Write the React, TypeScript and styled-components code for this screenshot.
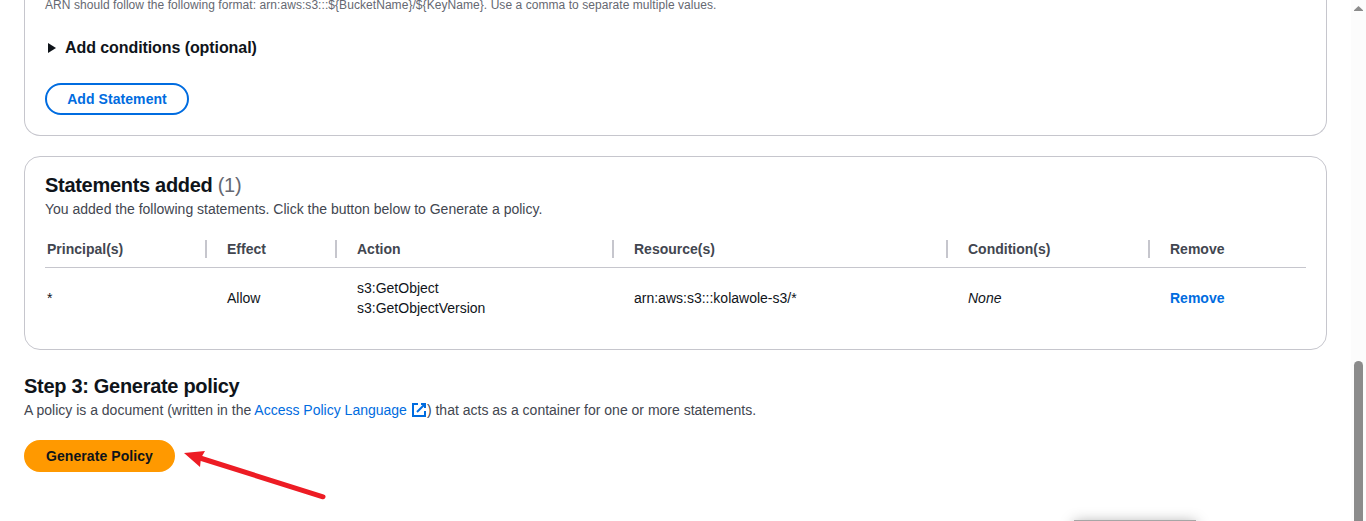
import React from "react";
import styled, { createGlobalStyle } from "styled-components";

const GlobalStyle = createGlobalStyle`
  * { box-sizing: border-box; }
  html, body { margin: 0; padding: 0; overflow: hidden; }
  body {
    background: #fff;
    color: #0f141a;
    font-family: "Liberation Sans", Arial, sans-serif;
    font-size: 14px;
    line-height: 20px;
  }
`;

const Viewport = styled.div`
  position: relative;
  display: flex;
  width: 1366px;
  height: 521px;
  overflow: hidden;
`;

const Page = styled.main`
  flex: 1;
  padding: 0 24px;
  display: flex;
  flex-direction: column;
  gap: 20px;
`;

const Card = styled.section<{ $clipped?: boolean }>`
  border: 1px solid #c6c6cd;
  border-radius: ${(p) => (p.$clipped ? "0 0 16px 16px" : "16px")};
  border-top-width: ${(p) => (p.$clipped ? "0" : "1px")};
  height: ${(p) => (p.$clipped ? "136px" : "194px")};
  padding: ${(p) => (p.$clipped ? "0 20px" : "15px 20px 0")};
`;

const Constraint = styled.p`
  margin: -3px 0 0;
  font-size: 12px;
  line-height: 16px;
  letter-spacing: 0.06px;
  color: #656871;
`;

const Expander = styled.div`
  display: flex;
  align-items: center;
  margin-top: 25px;
  height: 20px;
  padding-left: 3px;
  gap: 9px;
`;

const ExpanderTitle = styled.h3`
  margin: 0;
  font-size: 16px;
  line-height: 20px;
  letter-spacing: -0.08px;
`;

const Button = styled.button<{ $primary?: boolean }>`
  display: block;
  height: 32px;
  width: ${(p) => (p.$primary ? "151px" : "144px")};
  margin-top: ${(p) => (p.$primary ? "20px" : "25px")};
  padding: 0;
  border: 2px solid ${(p) => (p.$primary ? "#ff9900" : "#006ce0")};
  border-radius: 20px;
  background: ${(p) => (p.$primary ? "#ff9900" : "#fff")};
  color: ${(p) => (p.$primary ? "#0f141a" : "#006ce0")};
  font: bold 14px/20px "Liberation Sans", Arial, sans-serif;
  letter-spacing: 0.07px;
`;

const Title = styled.h2`
  margin: 0;
  font-size: 20px;
  line-height: 26px;
  letter-spacing: -0.3px;
`;

const Counter = styled.span`
  color: #656871;
  font-weight: 400;
`;

const Description = styled.p`
  margin: 1px 0 0;
  color: #424650;
`;

const TableGrid = styled.div`
  display: grid;
  grid-template-columns: 162px 130px 277px 334px 202px 156px;
`;

const HeaderRow = styled(TableGrid)`
  margin-top: 21px;
  height: 28px;
  border-bottom: 1px solid #c6c6cd;
`;

const HeaderCell = styled.div`
  height: 18px;
  padding-left: 20px;
  line-height: 18px;
  font-weight: 700;
  color: #424650;
  border-right: 2px solid #c6c6cd;
  &:first-child { padding-left: 2px; }
  &:last-child { border-right: 0; }
`;

const BodyRow = styled(TableGrid)`
  height: 60px;
  align-items: center;
`;

const Cell = styled.div`
  padding-left: 20px;
  &:first-child { padding-left: 2px; }
`;

const RemoveLink = styled.a`
  color: #006ce0;
  font-weight: 700;
`;

const Step = styled.section`
  margin-top: 3px;
`;

const DocLink = styled.a`
  color: #006ce0;
  svg { vertical-align: top; margin: 2px 0 0 4px; }
`;

const Scrollbar = styled.div`
  width: 15px;
  display: flex;
  flex-direction: column;
  align-items: center;
  background: #fcfcfc;
  padding-top: 6px;
  svg { flex-shrink: 0; }
`;

const Thumb = styled.div`
  width: 9px;
  height: 180px;
  margin-top: 350px;
  border-radius: 5px;
  background: #8b8b8b;
  flex-shrink: 0;
`;

const Arrow = styled.svg`
  position: absolute;
  left: 180px;
  top: 444px;
`;

const Popup = styled.div`
  position: absolute;
  left: 1074px;
  top: 520px;
  width: 122px;
  height: 30px;
  background: #a6a6a6;
  box-shadow: 0 2px 14px rgba(0, 0, 0, 0.34);
`;

const headers = ["Principal(s)", "Effect", "Action", "Resource(s)", "Condition(s)", "Remove"];

function ExternalIcon() {
  return (
    <svg width="16" height="16" viewBox="0 0 16 16" fill="none" stroke="#006ce0" strokeWidth="2">
      <path d="M10 2h4v4" />
      <path d="m6 10 8-8" />
      <path d="M14 9.048V14H2V2h5" />
    </svg>
  );
}

export default function App() {
  return (
    <>
      <GlobalStyle />
      <Viewport>
        <Page>
          <Card $clipped>
            <Constraint>
              {"ARN should follow the following format: arn:aws:s3:::${BucketName}/${KeyName}. Use a comma to separate multiple values."}
            </Constraint>
            <Expander>
              <svg width="8" height="10" viewBox="0 0 8 10">
                <path d="M0 0 8 5 0 10Z" fill="#0f141a" />
              </svg>
              <ExpanderTitle>Add conditions (optional)</ExpanderTitle>
            </Expander>
            <Button>Add Statement</Button>
          </Card>
          <Card>
            <Title>
              Statements added <Counter>(1)</Counter>
            </Title>
            <Description>
              You added the following statements. Click the button below to Generate a policy.
            </Description>
            <HeaderRow>
              {headers.map((h) => (
                <HeaderCell key={h}>{h}</HeaderCell>
              ))}
            </HeaderRow>
            <BodyRow>
              <Cell>*</Cell>
              <Cell>Allow</Cell>
              <Cell>
                s3:GetObject
                <br />
                s3:GetObjectVersion
              </Cell>
              <Cell>arn:aws:s3:::kolawole-s3/*</Cell>
              <Cell>
                <em>None</em>
              </Cell>
              <Cell>
                <RemoveLink>Remove</RemoveLink>
              </Cell>
            </BodyRow>
          </Card>
          <Step>
            <Title>Step 3: Generate policy</Title>
            <Description>
              A policy is a document (written in the{" "}
              <DocLink>
                Access Policy Language
                <ExternalIcon />
              </DocLink>
              ) that acts as a container for one or more statements.
            </Description>
            <Button $primary>Generate Policy</Button>
          </Step>
        </Page>
        <Scrollbar>
          <svg width="9" height="5" viewBox="0 0 9 5">
            <path d="M4.5 0 9 4.2V5H0V4.2Z" fill="#8b8b8b" />
          </svg>
          <Thumb />
        </Scrollbar>
        <Arrow width="150" height="60" viewBox="180 444 150 60">
          <path d="M200 458 323 496.8" stroke="#ed1c24" strokeWidth="5" strokeLinecap="round" />
          <path d="M184 453 205 451 201 458 200 467Z" fill="#ed1c24" />
        </Arrow>
        <Popup />
      </Viewport>
    </>
  );
}
